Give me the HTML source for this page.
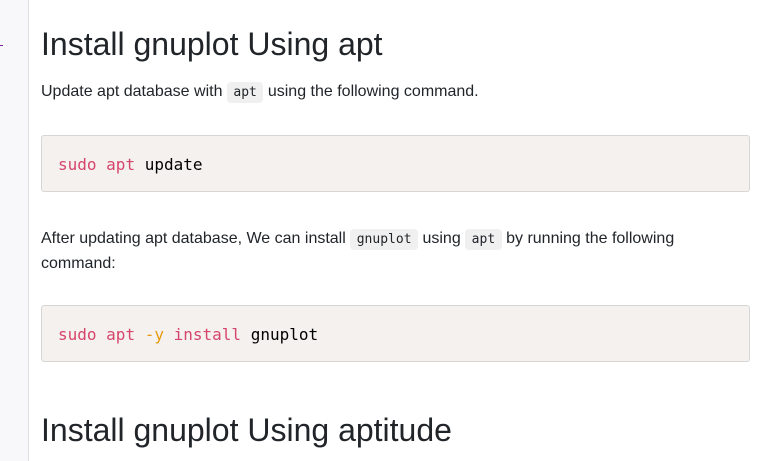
<!DOCTYPE html>
<html><head><style>
body{margin:0;width:783px;height:461px;overflow:hidden;background:#fff;font-family:"Liberation Sans",sans-serif;color:#212529;position:relative}
.side{position:absolute;left:0;top:0;width:28px;height:461px;background:#f8f7fa;border-right:1px solid #e0dfe4}
.mark{position:absolute;left:0;top:45px;width:3px;height:1px;background:#7b1fa2}
h1{position:absolute;left:41px;margin:0;font-size:32px;font-weight:400;line-height:36px;white-space:nowrap}
p{position:absolute;left:41px;margin:0;font-size:16px;line-height:24px;width:700px}
code{font-family:"DejaVu Sans Mono",monospace;font-size:13px;background:#f1f0f0;border-radius:4px;padding:3px 6.5px}
pre{position:absolute;left:41px;height:55px;margin:0;background:#f4f1ef;border:1px solid #d8d6d4;border-radius:3px;font-family:"DejaVu Sans Mono",monospace;font-size:16px;line-height:57px;padding:0 0 0 16px;box-sizing:content-box;width:691px;color:#000}
.r{color:#d6456b}.o{color:#e89a10}
</style></head><body>
<div class="side"></div><div class="mark"></div>
<h1 style="top:26px">Install gnuplot Using apt</h1>
<p style="top:80px">Update apt database with <code>apt</code> using the following command.</p>
<pre style="top:135px"><span class="r">sudo</span> <span class="r">apt</span> update</pre>
<p style="top:227px">After updating apt database, We can install <code>gnuplot</code> using <code>apt</code> by running the following command:</p>
<pre style="top:305px"><span class="r">sudo</span> <span class="r">apt</span> <span class="o">-y</span> <span class="r">install</span> gnuplot</pre>
<h1 style="top:412px">Install gnuplot Using aptitude</h1>
</body></html>
